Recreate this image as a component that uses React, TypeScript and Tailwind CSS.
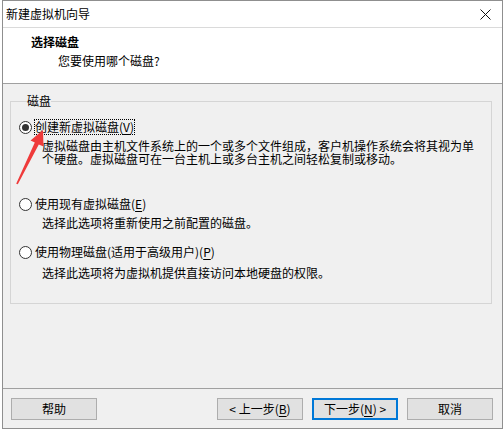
const Radio = ({ checked }: { checked?: boolean }) => (
  <span className="flex h-[13px] w-[13px] shrink-0 items-center justify-center rounded-full border border-[#333] bg-white">
    {checked && <span className="h-[7px] w-[7px] rounded-full bg-[#333]" />}
  </span>
);

const Btn = ({ children, primary }: { children: React.ReactNode; primary?: boolean }) => (
  <button
    className={
      primary
        ? "flex h-[22px] w-[86px] items-center justify-center border-2 border-[#0078d7] bg-[#e1e1e1] text-[12px] leading-none"
        : "flex h-[22px] w-[86px] items-center justify-center border border-[#adadad] bg-[#e1e1e1] text-[12px] leading-none"
    }
  >
    {children}
  </button>
);

const Key = ({ k }: { k: string }) => <span className="underline underline-offset-2">{k}</span>;

export default function App() {
  return (
    <div className="relative h-[430px] w-[504px] overflow-hidden bg-white pl-[2px] font-[family-name:'Noto_Sans_CJK_SC','Microsoft_YaHei',sans-serif] text-black">
      <div className="flex h-[429px] w-[501px] flex-col border border-[#8f8f8f] bg-[#f0f0f0]">
        {/* title bar */}
        <div className="flex h-[27px] shrink-0 items-center justify-between border-b border-[#dadada] bg-white pl-[3px] pr-[11px]">
          <span className="text-[12px] leading-[16px]">新建虚拟机向导</span>
          <svg width="11" height="11" viewBox="0 0 11 11" className="mt-[1px]">
            <path d="M0.5 0.5 L10.5 10.5 M10.5 0.5 L0.5 10.5" stroke="#111" strokeWidth="1" />
          </svg>
        </div>

        {/* header */}
        <div className="h-[56px] shrink-0 border-b border-[#a0a0a0] bg-white pt-[6px]">
          <div className="pl-[28px] text-[12px] font-bold leading-[16px]">选择磁盘</div>
          <div className="mt-[3px] pl-[55px] text-[12px] leading-[16px]">您要使用哪个磁盘?</div>
        </div>

        {/* body */}
        <div className="flex-1 px-[7px] pr-[10px] pt-[9px]">
          <fieldset className="border border-[#d5d5d5] pb-[24px] pl-[8px] pt-[10px]">
            <legend className="ml-[8px] text-[12px] leading-[16px]">磁盘</legend>

            <div className="flex items-center gap-[2px]">
              <Radio checked />
              <span className="border border-dotted border-black text-[12px] leading-[14px]">
                创建新虚拟磁盘(<Key k="V" />)
              </span>
            </div>
            <div className="mt-[4px] pl-[23px] text-[12px] leading-[13px]">
              <div>虚拟磁盘由主机文件系统上的一个或多个文件组成，客户机操作系统会将其视为单</div>
              <div>个硬盘。虚拟磁盘可在一台主机上或多台主机之间轻松复制或移动。</div>
            </div>

            <div className="mt-[31px] flex items-center gap-[2px]">
              <Radio />
              <span className="border border-transparent text-[12px] leading-[14px]">
                使用现有虚拟磁盘(<Key k="E" />)
              </span>
            </div>
            <div className="mt-[4px] pl-[23px] text-[12px] leading-[13px]">
              选择此选项将重新使用之前配置的磁盘。
            </div>

            <div className="mt-[15px] flex items-center gap-[2px]">
              <Radio />
              <span className="border border-transparent text-[12px] leading-[14px]">
                使用物理磁盘(适用于高级用户)(<Key k="P" />)
              </span>
            </div>
            <div className="mt-[6px] pl-[23px] text-[12px] leading-[13px]">
              选择此选项将为虚拟机提供直接访问本地硬盘的权限。
            </div>
          </fieldset>
        </div>

        {/* buttons */}
        <div className="flex h-[40px] shrink-0 items-start border-t border-[#a0a0a0] pl-[8px] pr-[9px] pt-[9px]">
          <Btn>帮助</Btn>
          <div className="flex-1" />
          <div className="flex gap-[9px]">
            <Btn>
              &lt; 上一步(<Key k="B" />)
            </Btn>
            <Btn primary>
              下一步(<Key k="N" />) &gt;
            </Btn>
            <Btn>取消</Btn>
          </div>
        </div>
      </div>

      {/* red annotation arrow */}
      <svg className="pointer-events-none absolute left-0 top-0" width="504" height="430">
        <polygon
          points="43,130 43.5,146.5 38.8,144.6 17.8,184.3 16.2,183.7 34.8,142.6 30.5,140.5"
          fill="#ef3b3b"
        />
      </svg>
    </div>
  );
}
